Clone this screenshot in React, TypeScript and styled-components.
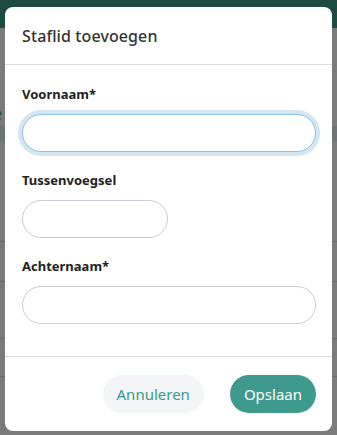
import React from 'react'
import styled, { createGlobalStyle } from 'styled-components'

const GlobalStyle = createGlobalStyle`
  html, body {
    margin: 0;
    padding: 0;
  }
  body {
    width: 337px;
    height: 435px;
    overflow: hidden;
    font-family: "Noto Sans", "Open Sans", sans-serif;
    background: #ffffff;
  }
`

const Page = styled.div`
  position: relative;
  width: 337px;
  height: 435px;
  overflow: hidden;
  background: #f6f7f7;
`

const TopBar = styled.div`
  height: 28px;
  background: #3c9486;
`

const PageBody = styled.div`
  padding: 72px 0 0 0;
  display: flex;
  flex-direction: column;
`

const PageHeading = styled.div`
  height: 26px;
  color: #3c9486;
  font-size: 18px;
  line-height: 26px;
  text-indent: -8px;
`

const TealRow = styled.div`
  height: 15px;
  margin-bottom: 100px;
  background: #d8ebe8;
`

const TableRow = styled.div<{ $h: number }>`
  height: ${p => p.$h}px;
  border-top: 1px solid #d4d4d4;
`

const Overlay = styled.div`
  position: absolute;
  inset: 0;
  background: rgba(0, 0, 0, 0.5);
`

const Modal = styled.div`
  position: absolute;
  left: 5px;
  top: 7px;
  width: 327px;
  height: 424px;
  background: #ffffff;
  border-radius: 8px;
  display: flex;
  flex-direction: column;
  overflow: hidden;
`

const Header = styled.div`
  height: 58px;
  padding: 0 17px;
  display: flex;
  align-items: center;
  border-bottom: 1px solid #dcdcdc;
  box-sizing: border-box;
`

const Title = styled.h2`
  margin: 0;
  font-size: 16px;
  font-weight: 500;
  color: #333333;
  letter-spacing: 0.1px;
`

const Body = styled.div`
  flex: 1;
  padding: 21px 16px 0 17px;
  display: flex;
  flex-direction: column;
  gap: 20px;
  border-bottom: 1px solid #dcdcdc;
`

const Field = styled.div`
  display: flex;
  flex-direction: column;
  gap: 12px;
`

const Label = styled.label`
  font-size: 13px;
  font-weight: 700;
  line-height: 16px;
  color: #222222;
`

const Input = styled.input<{ $width?: string; $focus?: boolean }>`
  box-sizing: border-box;
  width: ${p => p.$width ?? '100%'};
  height: 38px;
  border-radius: 19px;
  border: 1px solid ${p => (p.$focus ? '#8cc3e2' : '#c9ccd4')};
  box-shadow: ${p => (p.$focus ? '0 0 0 4px #d3e6f2' : 'none')};
  background: #ffffff;
  padding: 0 14px;
  font-family: inherit;
  font-size: 14px;
  outline: none;
`

const Footer = styled.div`
  height: 74px;
  padding: 0 16px;
  display: flex;
  align-items: center;
  justify-content: flex-end;
  gap: 26px;
  box-sizing: border-box;
`

const Button = styled.button<{ $primary?: boolean }>`
  height: 38px;
  padding: 0 14px;
  border: none;
  border-radius: 19px;
  font-family: inherit;
  font-size: 15px;
  font-weight: 400;
  background: ${p => (p.$primary ? '#3f9a8e' : '#f3f5f6')};
  color: ${p => (p.$primary ? '#ffffff' : '#3a9a8c')};
  cursor: pointer;
`

export default function App() {
  return (
    <>
      <GlobalStyle />
      <Page>
        <TopBar />
        <PageBody>
          <PageHeading>e</PageHeading>
          <TealRow />
          <TableRow $h={39} />
          <TableRow $h={56} />
          <TableRow $h={37} />
          <TableRow $h={40} />
        </PageBody>
        <Overlay />
        <Modal>
          <Header>
            <Title>Staflid toevoegen</Title>
          </Header>
          <Body>
            <Field>
              <Label>Voornaam*</Label>
              <Input $focus />
            </Field>
            <Field>
              <Label>Tussenvoegsel</Label>
              <Input $width="146px" />
            </Field>
            <Field>
              <Label>Achternaam*</Label>
              <Input />
            </Field>
          </Body>
          <Footer>
            <Button>Annuleren</Button>
            <Button $primary>Opslaan</Button>
          </Footer>
        </Modal>
      </Page>
    </>
  )
}
